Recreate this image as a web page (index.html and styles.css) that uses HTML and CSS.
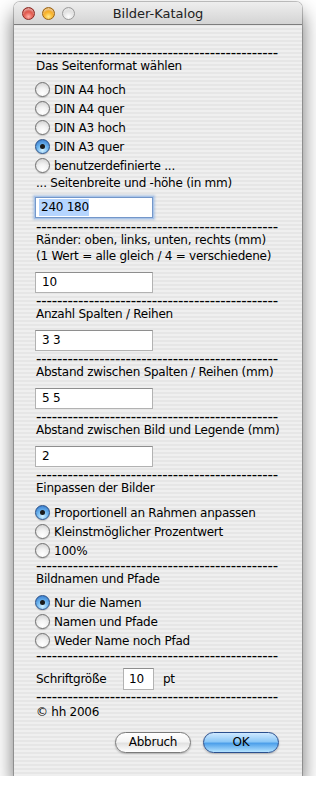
FILE: index.html
```html
<!DOCTYPE html>
<html lang="de">
<head>
  <meta charset="UTF-8" />
  <title>Bilder-Katalog</title>
  <link rel="stylesheet" href="styles.css">
</head>
<body>
  <div class="window">
    <div class="titlebar">
      <div class="lights">
        <span class="light red"></span>
        <span class="light orange"></span>
        <span class="light grey"></span>
      </div>
      <div class="title">Bilder-Katalog</div>
      <div></div>
    </div>

    <div class="content">
      <div class="sep">----------------------------------------------</div>
      <div class="label">Das Seitenformat wählen</div>
      <div class="radios first">
        <div class="radio-row"><span class="radio"></span>DIN A4 hoch</div>
        <div class="radio-row"><span class="radio"></span>DIN A4 quer</div>
        <div class="radio-row"><span class="radio"></span>DIN A3 hoch</div>
        <div class="radio-row"><span class="radio on"></span>DIN A3 quer</div>
        <div class="radio-row"><span class="radio"></span>benutzerdefinierte ...</div>
      </div>
      <div class="label tight">... Seitenbreite und -höhe (in mm)</div>
      <div class="field focus near"><span class="selected">240 180</span></div>

      <div class="sep">----------------------------------------------</div>
      <div class="label">Ränder: oben, links, unten, rechts (mm)</div>
      <div class="label sub">(1 Wert = alle gleich / 4 = verschiedene)</div>
      <div class="field">10</div>

      <div class="sep">----------------------------------------------</div>
      <div class="label">Anzahl Spalten / Reihen</div>
      <div class="field">3 3</div>

      <div class="sep">----------------------------------------------</div>
      <div class="label">Abstand zwischen Spalten / Reihen (mm)</div>
      <div class="field">5 5</div>

      <div class="sep">----------------------------------------------</div>
      <div class="label">Abstand zwischen Bild und Legende (mm)</div>
      <div class="field">2</div>

      <div class="sep">----------------------------------------------</div>
      <div class="label">Einpassen der Bilder</div>
      <div class="radios">
        <div class="radio-row"><span class="radio on"></span>Proportionell an Rahmen anpassen</div>
        <div class="radio-row"><span class="radio"></span>Kleinstmöglicher Prozentwert</div>
        <div class="radio-row"><span class="radio"></span>100%</div>
      </div>

      <div class="sep after-radios">----------------------------------------------</div>
      <div class="label">Bildnamen und Pfade</div>
      <div class="radios tight">
        <div class="radio-row"><span class="radio on"></span>Nur die Namen</div>
        <div class="radio-row"><span class="radio"></span>Namen und Pfade</div>
        <div class="radio-row"><span class="radio"></span>Weder Name noch Pfad</div>
      </div>

      <div class="sep after-radios">----------------------------------------------</div>
      <div class="size-row">
        <span class="size-label">Schriftgröße</span>
        <span class="field small">10</span>
        <span class="unit">pt</span>
      </div>

      <div class="sep after-size">----------------------------------------------</div>
      <div class="label copy">© hh 2006</div>

      <div class="buttons">
        <span class="button">Abbruch</span>
        <span class="button default">OK</span>
      </div>
    </div>
  </div>
</body>
</html>
```

FILE: styles.css
```css
body {
  margin: 0;
  background: #fff;
  font-family: "DejaVu Sans", sans-serif;
  font-size: 12px;
  letter-spacing: -0.25px;
  color: #000;
}
.window {
  width: 288px;
  margin: 2px 0 0 14px;
  border-radius: 6px 6px 0 0;
  background: repeating-linear-gradient(#efefef 0 2px, #e6e6e6 2px 4px);
  box-shadow: 0 0 0 1px rgba(0,0,0,0.22), 0 11px 20px rgba(0,0,0,0.6);
}

/* title bar */
.titlebar {
  height: 22px;
  display: grid;
  grid-template-columns: 1fr auto 1fr;
  align-items: center;
  border-bottom: 1px solid #7d7d7d;
  border-radius: 6px 6px 0 0;
  background: linear-gradient(#eeeeee, #d4d4d4);
}
.lights {
  display: flex;
  gap: 7px;
  padding-left: 8px;
}
.light {
  width: 13px;
  height: 13px;
  border-radius: 50%;
  box-sizing: border-box;
  box-shadow: inset 0 2px 2px rgba(255,255,255,0.55);
}
.light.red {
  border: 1px solid #8a2a24;
  background: radial-gradient(circle at 50% 78%, #ffb0a8 0, #e2574b 45%, #b3261c 100%);
}
.light.orange {
  border: 1px solid #9a6514;
  background: radial-gradient(circle at 50% 78%, #ffeb8a 0, #f7ab1c 50%, #c07008 100%);
}
.light.grey {
  border: 1px solid #9c9c9c;
  background: radial-gradient(circle at 50% 78%, #ffffff 0, #e2e2e2 50%, #b8b8b8 100%);
}
.title {
  font-size: 13px;
  letter-spacing: 0;
  color: #222;
}

/* content */
.content {
  padding: 24px 23px 23px 22px;
}
.sep {
  height: 8px;
  line-height: 8px;
  font-size: 15px;
  letter-spacing: -0.15px;
  white-space: nowrap;
}
.sep.after-radios { margin-top: 2px; }
.sep.after-size { margin-top: 3px; }
.label {
  line-height: 16px;
  margin-top: 1px;
  white-space: nowrap;
}
.label.tight { margin-top: 0; }
.label.sub { margin-top: 0; }
.label.copy { margin-top: 3px; }

.radios { margin-top: 7px; }
.radios.first { margin-top: 6px; }
.radios.tight { margin-top: 6px; }
.radio-row {
  height: 19px;
  display: flex;
  align-items: center;
  gap: 4px;
  margin-left: -1px;
  white-space: nowrap;
}
.radio {
  width: 15px;
  height: 15px;
  box-sizing: border-box;
  border-radius: 50%;
  border: 1px solid #6f6f6f;
  background: radial-gradient(circle at 50% 80%, #ffffff 0, #f1f1f1 45%, #c9c9c9 100%);
  box-shadow: 0 1px 1px rgba(0,0,0,0.18);
  display: flex;
  align-items: center;
  justify-content: center;
}
.radio.on {
  border-color: #284f86;
  background: radial-gradient(circle at 50% 80%, #d2f0ff 0, #6fb6ef 45%, #2b6fc6 100%);
}
.radio.on::after {
  content: "";
  width: 5px;
  height: 5px;
  border-radius: 50%;
  background: #1a1a1a;
}

.field {
  width: 118px;
  height: 21px;
  box-sizing: border-box;
  margin: 8px 0 4px -1px;
  padding: 0 0 0 6px;
  line-height: 19px;
  background: #fff;
  border: 1px solid #b2b2b2;
  border-top-color: #8e8e8e;
}
.field.near { margin-top: 6px; margin-bottom: 5px; }
.field.focus {
  border: 1px solid #7497c9;
  box-shadow: 0 0 0 1px #a9c4e8, 0 0 2px 2px rgba(120,160,215,0.45);
  padding-left: 3px;
}
.selected {
  background: #b5d5ff;
  padding: 1px 0 2px 2px;
}

.size-row {
  display: flex;
  align-items: center;
  height: 22px;
  margin-top: 8px;
}
.size-label { width: 87px; }
.field.small {
  width: 31px;
  height: 22px;
  margin: 0;
  line-height: 20px;
  padding-left: 5px;
}
.unit { margin-left: 9px; }

.buttons {
  display: flex;
  justify-content: flex-end;
  gap: 12px;
  margin-top: 12px;
}
.button {
  width: 76px;
  height: 21px;
  box-sizing: border-box;
  border-radius: 11px;
  text-align: center;
  line-height: 19px;
  border: 1px solid #7a7a7a;
  background: linear-gradient(#ffffff 0, #f4f4f4 45%, #e2e2e2 55%, #ffffff 100%);
  box-shadow: 0 1px 2px rgba(0,0,0,0.25);
}
.button.default {
  border-color: #2a4f8e;
  background: linear-gradient(#cfe9ff 0, #8cc8f7 45%, #4ea0ea 55%, #b4e3ff 100%);
}
```
